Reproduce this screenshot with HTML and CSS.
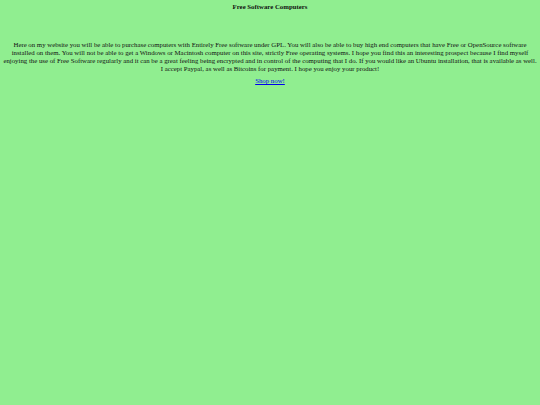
FILE: index.html
```html
<!DOCTYPE html>
<html>
<head>
<meta charset="utf-8">
<link rel="stylesheet" href="styles.css">
</head>
<body>
<h1 class="title">Free Software Computers</h1>
<p class="intro">Here on my website you will be able to purchase computers with Entirely Free software under GPL. You will also be able to buy high end computers that have Free or OpenSource software installed on them. You will not be able to get a Windows or Macintosh computer on this site, strictly Free operating systems. I hope you find this an interesting prospect because I find myself enjoying the use of Free Software regularly and it can be a great feeling being encrypted and in control of the computing that I do. If you would like an Ubuntu installation, that is available as well. I accept Paypal, as well as Bitcoins for payment. I hope you enjoy your product!</p>
<p class="shop"><a href="#">Shop now!</a></p>
</body>
</html>
```
FILE: styles.css
```css
html, body {
  background: #90ee90;
}
body {
  margin: 3px 2px;
  font-family: "Liberation Serif", serif;
  font-size: 6.8px;
  line-height: 8px;
  color: #111;
  text-align: center;
}
.title {
  font-size: 6.8px;
  font-weight: bold;
  margin: 0 0 30px;
}
.intro {
  margin: 0 0 4px;
}
.shop {
  margin: 0;
}
.shop a {
  color: #0000ee;
}
```
